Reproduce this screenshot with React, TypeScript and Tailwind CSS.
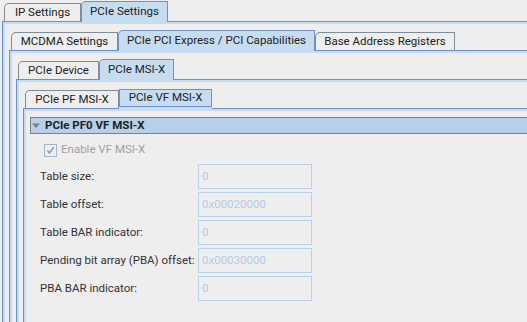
import type { ReactNode } from "react";

type TabDef = { label: string; w: string; selected?: boolean; focus?: boolean };

function Tab({ label, w, selected, focus }: TabDef) {
  if (focus) {
    return (
      <div className={`relative z-10 -mb-px flex h-[20px] flex-col ${w}`}>
        <div className="flex h-[18px] items-center justify-center border border-[#6d8fca] bg-[#c6dcf1] text-[#222]">
          {label}
        </div>
        <div className="h-[2px] bg-[#c6dcf1]" />
      </div>
    );
  }
  if (selected) {
    return (
      <div
        className={`relative z-10 -mb-px flex h-[21px] items-center justify-center rounded-tl-[5px] border-x border-t border-[#6d8fca] bg-[#c6dcf1] pb-[1px] text-[#222] ${w}`}
      >
        {label}
      </div>
    );
  }
  return (
    <div
      className={`flex h-[18px] items-center justify-center rounded-tl-[5px] border-x border-t border-[#7e8b9b] text-[#222] ${w}`}
    >
      {label}
    </div>
  );
}

function TabPane({ tabs, children }: { tabs: TabDef[]; children: ReactNode }) {
  return (
    <div className="flex flex-col">
      <div className="flex h-[20px] items-end pl-[2px]">
        {tabs.map(t => (
          <Tab key={t.label} {...t} />
        ))}
      </div>
      <div className="border border-[#6d8fca]">
        <div className="border-2 border-[#c6dcf1] pl-[4px] pt-[6px]">{children}</div>
      </div>
    </div>
  );
}

const fields = [
  { label: "Table size:", value: "0" },
  { label: "Table offset:", value: "0x00020000" },
  { label: "Table BAR indicator:", value: "0" },
  { label: "Pending bit array (PBA) offset:", value: "0x00030000" },
  { label: "PBA BAR indicator:", value: "0" },
];

function MsixSection() {
  return (
    <div className="pb-[80px]">
      <div className="flex h-[17px] items-center border border-[#7f8080] bg-[#b8cfe8] pl-[1px]">
        <svg width="8" height="6" viewBox="0 0 8 6" className="mr-[5px]">
          <path d="M0 0.5 H8 L4 5 Z" fill="#7a7f88" />
        </svg>
        <span className="font-bold text-[#222]">PCIe PF0 VF MSI-X</span>
      </div>
      <div className="mt-[9px] flex h-[14px] items-center pl-[14px]">
        <div className="flex h-[13px] w-[13px] items-center justify-center border border-[#a3b6cc] bg-[#eeeeee]">
          <svg width="9" height="9" viewBox="0 0 9 9">
            <path d="M1.5 4.5 L3.5 7 L7.8 1.2" stroke="#8397b0" strokeWidth="1.4" fill="none" />
          </svg>
        </div>
        <span className="ml-[4px] text-[#a0a0a0]">Enable VF MSI-X</span>
      </div>
      <div className="mt-[7px] grid grid-cols-[158px_114px] gap-y-[3px] pl-[10px]">
        {fields.map(f => (
          <div key={f.label} className="contents">
            <div className="flex h-[25px] items-center whitespace-nowrap text-[#333]">{f.label}</div>
            <div className="flex h-[25px] items-center border border-[#b9d0ea] pl-[3px] text-[#b5cae3]">
              {f.value}
            </div>
          </div>
        ))}
      </div>
    </div>
  );
}

export default function App() {
  return (
    <div
      className="h-[322px] w-[527px] overflow-hidden bg-[#eeeeee] text-[11.5px] leading-none"
      style={{ fontFamily: "Roboto, 'Liberation Sans', sans-serif" }}
    >
      <div className="w-[560px] pl-[2px] pt-[1px]">
        <TabPane
          tabs={[
            { label: "IP Settings", w: "w-[77px]" },
            { label: "PCIe Settings", w: "w-[87px]", selected: true },
          ]}
        >
          <TabPane
            tabs={[
              { label: "MCDMA Settings", w: "w-[107px]" },
              { label: "PCIe PCI Express / PCI Capabilities", w: "w-[197px]", selected: true },
              { label: "Base Address Registers", w: "w-[140px]" },
            ]}
          >
            <TabPane
              tabs={[
                { label: "PCIe Device", w: "w-[81px]" },
                { label: "PCIe MSI-X", w: "w-[75px]", selected: true },
              ]}
            >
              <TabPane
                tabs={[
                  { label: "PCIe PF MSI-X", w: "w-[94px]" },
                  { label: "PCIe VF MSI-X", w: "w-[93px]", selected: true, focus: true },
                ]}
              >
                <MsixSection />
              </TabPane>
            </TabPane>
          </TabPane>
        </TabPane>
      </div>
    </div>
  );
}
